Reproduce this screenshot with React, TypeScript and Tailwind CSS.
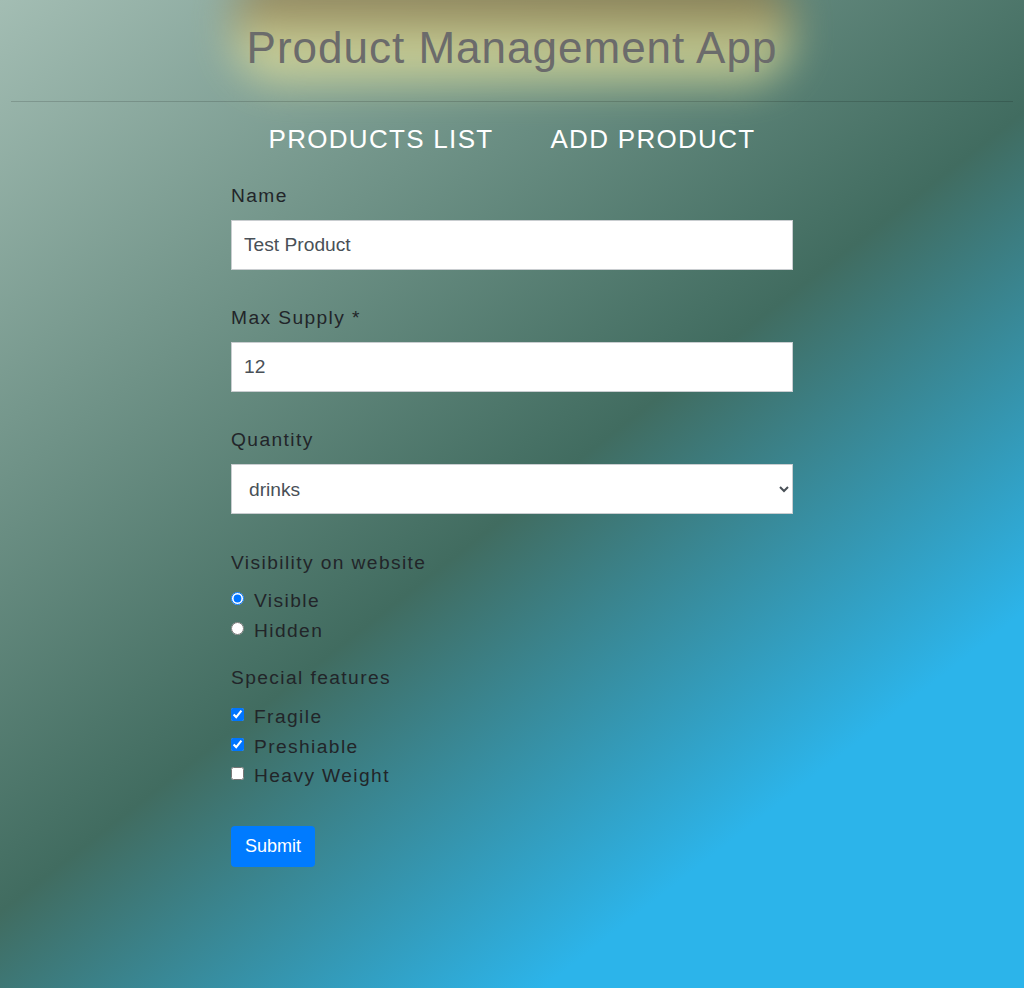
import React, { useState } from 'react';

type TextFieldProps = {
  label: string;
  value: string;
  onChange: (value: string) => void;
};

const fieldLabel = 'block text-[19.2px] leading-[24px] tracking-[1.4px] text-[#222529]';
const fieldBox =
  'block w-full h-[50px] bg-white border border-[#c9cdd0] text-[19.2px] text-[#495057] outline-none';

const TextField = ({ label, value, onChange }: TextFieldProps): JSX.Element => (
  <div className="mb-[36px]">
    <label className={`${fieldLabel} mb-[12px]`}>{label}</label>
    <input
      className={`${fieldBox} px-3`}
      value={value}
      onChange={e => onChange(e.target.value)}
    />
  </div>
);

const features = ['Fragile', 'Preshiable', 'Heavy Weight'];

const App = (): JSX.Element => {
  const [name, setName] = useState('Test Product');
  const [maxSupply, setMaxSupply] = useState('12');
  const [category, setCategory] = useState('drinks');
  const [visibility, setVisibility] = useState('visible');
  const [checked, setChecked] = useState<string[]>(['Fragile', 'Preshiable']);

  const toggleFeature = (feature: string) => {
    setChecked(prev =>
      prev.includes(feature) ? prev.filter(f => f !== feature) : [...prev, feature]
    );
  };

  return (
    <div className="min-h-screen w-full overflow-hidden font-['Liberation_Sans',Arial,sans-serif] bg-[linear-gradient(142deg,#a3bdb3_0%,#416c60_51%,#2cb4ea_79%,#2cb4ea_100%)]">
      <header className="relative pt-[21px]">
        {/* soft golden glow behind the title */}
        <div className="absolute left-1/2 -translate-x-1/2 -top-[30px] w-[560px] h-[112px] rounded-[48px] bg-[linear-gradient(to_bottom,#86693a_0%,#a08a52_35%,#e4e29a_70%,#dcdc98_100%)] opacity-75 blur-[20px]" />
        <h1 className="relative text-center text-[44px] leading-[53px] tracking-[1px] text-[#6b6b6b]">
          Product Management App
        </h1>
        <hr className="relative mx-[11px] mt-[27px] border-0 border-t border-black/15" />
      </header>

      <nav className="flex justify-center gap-[57px] mt-[22px] text-[26px] leading-[30px] tracking-[1.3px] text-white">
        <a href="#list">PRODUCTS LIST</a>
        <a href="#add">ADD PRODUCT</a>
      </nav>

      <form className="w-[562px] mx-auto mt-[30px] pb-[120px]" onSubmit={e => e.preventDefault()}>
        <TextField label="Name" value={name} onChange={setName} />
        <TextField label="Max Supply *" value={maxSupply} onChange={setMaxSupply} />

        <div className="mb-[37px]">
          <label className={`${fieldLabel} mb-[12px]`}>Quantity</label>
          <select
            className={`${fieldBox} pl-[13px] pr-1`}
            value={category}
            onChange={e => setCategory(e.target.value)}
          >
            <option value="drinks">drinks</option>
            <option value="food">food</option>
            <option value="other">other</option>
          </select>
        </div>

        <div className={fieldLabel}>Visibility on website</div>
        <div className="mt-[11px]">
          {['visible', 'hidden'].map(v => (
            <label
              key={v}
              className="flex items-center gap-[10px] text-[19.2px] leading-[30px] tracking-[1.4px] text-[#222529]"
            >
              <input
                type="radio"
                name="visibility"
                className="m-0 mb-[5px] w-[13px] h-[13px]"
                checked={visibility === v}
                onChange={() => setVisibility(v)}
              />
              {v === 'visible' ? 'Visible' : 'Hidden'}
            </label>
          ))}
        </div>

        <div className={`${fieldLabel} mt-[20px]`}>Special features</div>
        <div className="mt-[12px]">
          {features.map(feature => (
            <label
              key={feature}
              className="flex items-center gap-[10px] text-[19.2px] leading-[29.5px] tracking-[1.4px] text-[#222529]"
            >
              <input
                type="checkbox"
                className="m-0 mb-1 w-[13px] h-[13px]"
                checked={checked.includes(feature)}
                onChange={() => toggleFeature(feature)}
              />
              {feature}
            </label>
          ))}
        </div>

        <button
          type="submit"
          className="mt-[35px] h-[41px] px-[14px] rounded-[4px] bg-[#007bff] text-white text-[18px] leading-[27px]"
        >
          Submit
        </button>
      </form>
    </div>
  );
};

export default App;
